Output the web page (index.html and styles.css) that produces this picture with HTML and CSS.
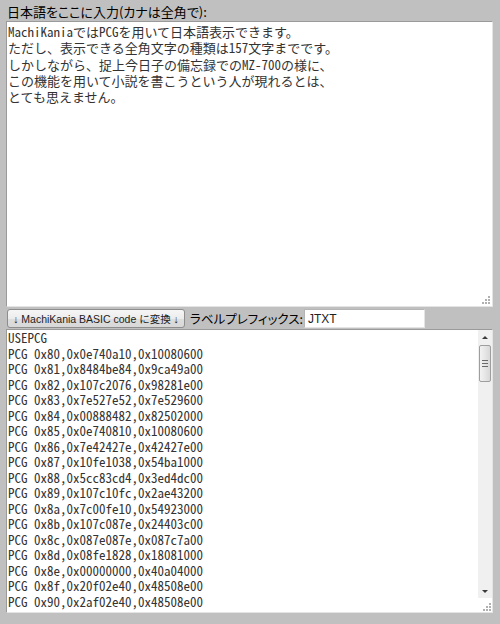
FILE: index.html
```html
<!DOCTYPE html>
<html>
<head>
	<meta charset="utf-8">
	<title>MachiKania PCG</title>
	<link rel="stylesheet" href="styles.css">
</head>
<body>
	<div class="caption">日本語をここに入力(カナは全角で):</div>
	<div class="box src-box">
		<textarea id="src" class="text" spellcheck="false">MachiKaniaではPCGを用いて日本語表示できます。
ただし、表示できる全角文字の種類は157文字までです。
しかしながら、捉上今日子の備忘録でのMZ-700の様に、
この機能を用いて小説を書こうという人が現れるとは、
とても思えません。</textarea>
		<svg class="grip grip-over" width="11" height="11" viewBox="0 0 11 11">
			<rect x="8" y="2" width="2" height="2" fill="#b0b0b0"/>
			<rect x="5" y="5" width="2" height="2" fill="#b0b0b0"/>
			<rect x="8" y="5" width="2" height="2" fill="#b0b0b0"/>
			<rect x="2" y="8" width="2" height="2" fill="#b0b0b0"/>
			<rect x="5" y="8" width="2" height="2" fill="#b0b0b0"/>
			<rect x="8" y="8" width="2" height="2" fill="#b0b0b0"/>
		</svg>
	</div>
	<div class="controls">
		<button class="convert">↓ MachiKania BASIC code に変換 ↓</button>
		<span class="prefix-label">ラベルプレフィックス:</span>
		<input type="text" class="prefix" value="JTXT">
	</div>
	<div class="box out-box">
		<textarea id="out" class="text code" spellcheck="false">USEPCG
PCG 0x80,0x0e740a10,0x10080600
PCG 0x81,0x8484be84,0x9ca49a00
PCG 0x82,0x107c2076,0x98281e00
PCG 0x83,0x7e527e52,0x7e529600
PCG 0x84,0x00888482,0x82502000
PCG 0x85,0x0e740810,0x10080600
PCG 0x86,0x7e42427e,0x42427e00
PCG 0x87,0x10fe1038,0x54ba1000
PCG 0x88,0x5cc83cd4,0x3ed4dc00
PCG 0x89,0x107c10fc,0x2ae43200
PCG 0x8a,0x7c00fe10,0x54923000
PCG 0x8b,0x107c087e,0x24403c00
PCG 0x8c,0x087e087e,0x087c7a00
PCG 0x8d,0x08fe1828,0x18081000
PCG 0x8e,0x00000000,0x40a04000
PCG 0x8f,0x20f02e40,0x48508e00
PCG 0x90,0x2af02e40,0x48508e00
PCG 0x91,0x00000000,0x00001e00
PCG 0x92,0x04fe0444,0x240c1000
PCG 0x93,0x10fe1010,0x38545400
PCG 0x94,0x7c44447c,0x44447c00
PCG 0x95,0x10107c10,0x10107e00
PCG 0x96,0x28fe2838,0x10fe1000
PCG 0x97,0x3e22223e,0x22223e00
PCG 0x98,0x08087f08,0x1c2a4900
PCG 0x99,0x7e020202,0x02027e00
PCG 0x9a,0x24fe2424,0x04083000
PCG 0x9b,0x00020408,0x10204000
PCG 0x9c,0x7c000000,0x0000fe00</textarea>
		<div class="scrollbar">
			<div class="arrow up"></div>
			<div class="track">
				<div class="thumb"><span></span><span></span><span></span></div>
			</div>
			<div class="arrow down"></div>
			<div class="corner">
				<svg class="grip" width="11" height="11" viewBox="0 0 11 11">
					<rect x="8" y="2" width="2" height="2" fill="#b0b0b0"/>
					<rect x="5" y="5" width="2" height="2" fill="#b0b0b0"/>
					<rect x="8" y="5" width="2" height="2" fill="#b0b0b0"/>
					<rect x="2" y="8" width="2" height="2" fill="#b0b0b0"/>
					<rect x="5" y="8" width="2" height="2" fill="#b0b0b0"/>
					<rect x="8" y="8" width="2" height="2" fill="#b0b0b0"/>
				</svg>
			</div>
		</div>
	</div>
</body>
</html>
```

FILE: styles.css
```css
body{
	background-color: #c0c0c0;
	margin: 0;
	padding: 4px 6px 0 6px;
	font-family: "Noto Sans CJK JP", sans-serif;
	color: #000;
}
.caption{
	font-size: 13px;
	font-feature-settings: "palt";
	line-height: 16px;
	height: 17px;
	padding-left: 1px;
}
.box{
	position: relative;
	display: flex;
	box-sizing: border-box;
	width: 487px;
	border: 1px solid;
	border-color: #9a9a9a #e4e4e4 #e4e4e4 #9a9a9a;
	background: #fff;
}
.src-box{
	height: 286px;
}
.out-box{
	height: 284px;
}
.text{
	flex: 1;
	min-width: 0;
	margin: 0;
	padding: 2px 1px 0 1px;
	border: none;
	background: #fff;
	color: #333;
	font-family: "Noto Sans CJK JP", sans-serif;
	font-feature-settings: "hwid";
	font-size: 13px;
	line-height: 16.25px;
	outline: none;
	resize: none;
	overflow: hidden;
}
.code{
	padding-top: 0;
	line-height: 15.5px;
}
.grip-over{
	position: absolute;
	right: 1px;
	bottom: 1px;
}
.scrollbar{
	display: flex;
	flex-direction: column;
	width: 14px;
	background: #f0f0f0;
}
.arrow{
	height: 14px;
	display: flex;
	align-items: center;
	justify-content: center;
}
.arrow::before{
	content: "";
	width: 0;
	height: 0;
	border-left: 3px solid transparent;
	border-right: 3px solid transparent;
}
.up::before{
	border-bottom: 3px solid #3a3a3a;
}
.down::before{
	border-top: 3px solid #3a3a3a;
}
.track{
	flex: 1;
	padding-top: 1px;
}
.thumb{
	box-sizing: border-box;
	height: 37px;
	margin: 0 1px;
	border: 1px solid #9e9e9e;
	border-radius: 2px;
	background: linear-gradient(to right, #f2f2f2, #e6e6e6 50%, #d8d8d8);
	display: flex;
	flex-direction: column;
	justify-content: center;
	align-items: center;
	gap: 2px;
}
.thumb span{
	display: block;
	width: 6px;
	height: 1px;
	background: #6a6a6a;
}
.corner{
	height: 14px;
	background: #fff;
	display: flex;
	justify-content: flex-end;
	align-items: flex-end;
}
.controls{
	display: flex;
	align-items: center;
	height: 19px;
	margin: 2px 0 1px 0;
}
.convert{
	box-sizing: border-box;
	height: 19px;
	width: 178px;
	flex: none;
	margin: 0 0 0 1px;
	padding: 0;
	border: 1px solid #8d8d8d;
	border-radius: 3px;
	background: linear-gradient(to bottom, #f6f6f6 0%, #ececec 50%, #dedede 51%, #d8d8d8 100%);
	color: #222;
	font-family: "Liberation Sans", "Noto Sans CJK JP", sans-serif;
	font-size: 10.5px;
	line-height: 16px;
	white-space: nowrap;
	overflow: hidden;
	text-align: center;
}
.prefix-label{
	margin-left: 5px;
	font-size: 12.5px;
	font-feature-settings: "palt";
	line-height: 16px;
	white-space: nowrap;
}
.prefix{
	box-sizing: border-box;
	width: 121px;
	height: 19px;
	margin: 0 0 0 1px;
	padding: 0 3px;
	border: 1px solid;
	border-color: #b5b5b5 #e4e4e4 #e4e4e4 #b5b5b5;
	background: #fff;
	color: #222;
	font-family: "Liberation Sans", sans-serif;
	font-size: 12px;
	outline: none;
}
```
